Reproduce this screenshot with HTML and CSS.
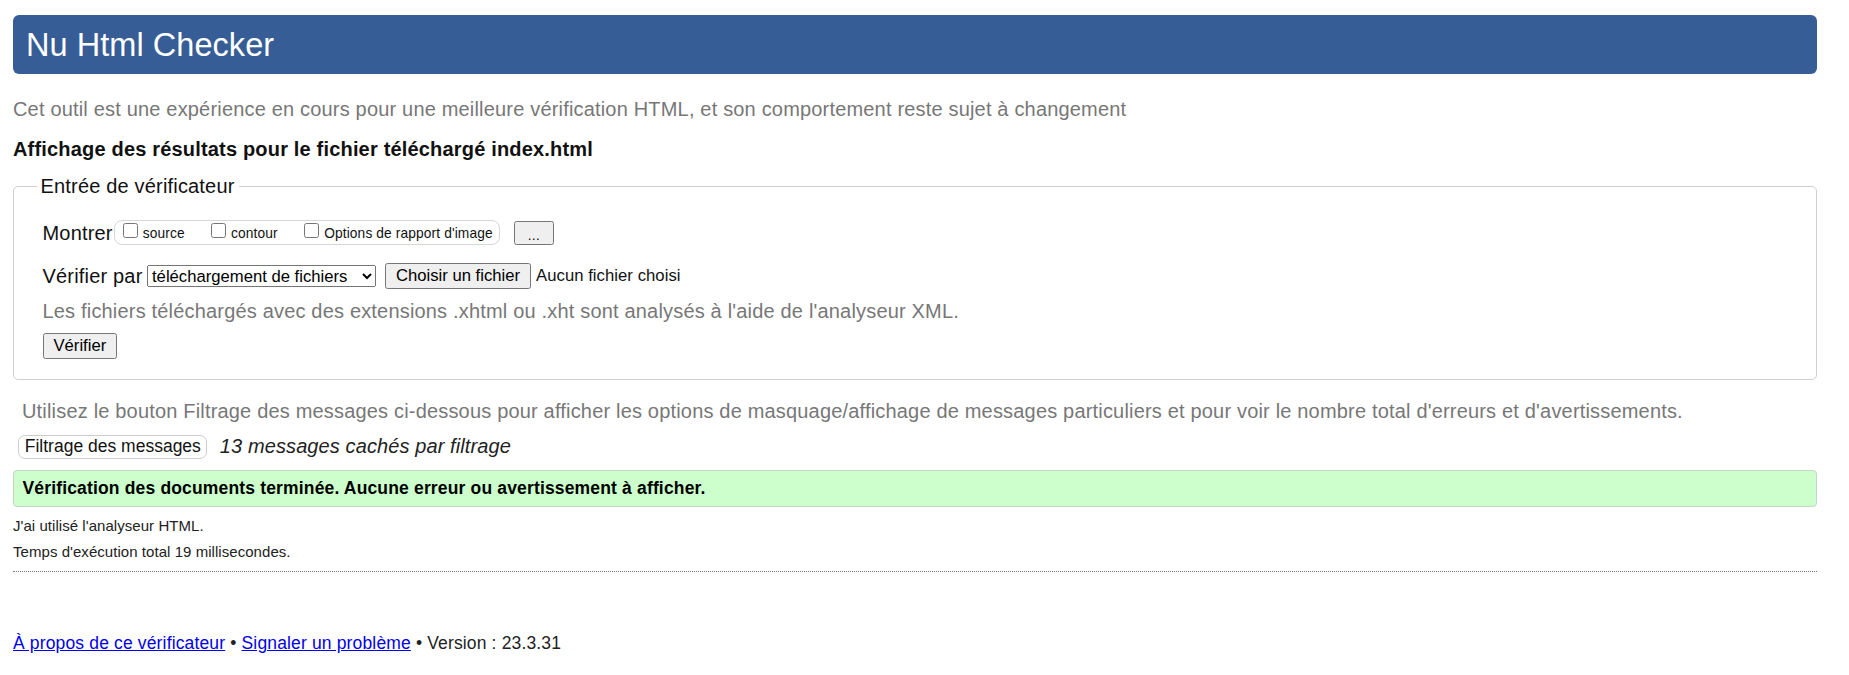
FILE: index.html
```html
<!DOCTYPE html>
<html lang="fr">
<head>
<meta charset="utf-8">
<title>Nu Html Checker</title>
<link rel="stylesheet" href="styles.css">
</head>
<body>
<h1 class="title">Nu Html Checker</h1>
<p class="intro">Cet outil est une expérience en cours pour une meilleure vérification HTML, et son comportement reste sujet à changement</p>
<p class="showing">Affichage des résultats pour le fichier téléchargé index.html</p>
<form class="checker">
  <fieldset class="input-box">
    <legend class="input-legend">Entrée de vérificateur</legend>
    <div class="row row-show">
      <span class="row-label">Montrer</span>
      <span class="options">
        <label class="opt"><input type="checkbox" class="cb"><span class="opt-text">source</span></label>
        <label class="opt"><input type="checkbox" class="cb"><span class="opt-text">contour</span></label>
        <label class="opt"><input type="checkbox" class="cb"><span class="opt-text">Options de rapport d'image</span></label>
      </span>
      <button type="button" class="more">…</button>
    </div>
    <div class="row row-by">
      <span class="row-label">Vérifier par</span>
      <select class="by-select"><option>téléchargement de fichiers</option></select>
      <button type="button" class="file-btn">Choisir un fichier</button>
      <span class="file-name">Aucun fichier choisi</span>
    </div>
    <p class="hint">Les fichiers téléchargés avec des extensions .xhtml ou .xht sont analysés à l'aide de l'analyseur XML.</p>
    <div class="row row-submit">
      <button type="button" class="submit">Vérifier</button>
    </div>
  </fieldset>
</form>
<p class="filter-hint">Utilisez le bouton Filtrage des messages ci-dessous pour afficher les options de masquage/affichage de messages particuliers et pour voir le nombre total d'erreurs et d'avertissements.</p>
<div class="filter-row">
  <button type="button" class="filter-btn">Filtrage des messages</button>
  <em class="hidden-count">13 messages cachés par filtrage</em>
</div>
<p class="success">Vérification des documents terminée. Aucune erreur ou avertissement à afficher.</p>
<p class="stats stats-first">J'ai utilisé l'analyseur HTML.</p>
<p class="stats">Temps d'exécution total 19 millisecondes.</p>
<hr class="sep">
<p class="footer"><a href="#" class="foot-link">À propos de ce vérificateur</a> • <a href="#" class="foot-link">Signaler un problème</a> • Version : 23.3.31</p>
</body>
</html>
```

FILE: styles.css
```css
html {
  background: #fff;
}

body {
  margin: 0;
  padding: 15px 32px 0 13px;
  font-family: "Liberation Sans", Arial, sans-serif;
  font-size: 20px;
  letter-spacing: 0.18px;
  color: #111;
}

.title {
  margin: 0;
  height: 59px;
  padding: 0 13px;
  background: #365d95;
  color: #fff;
  border-radius: 6px;
  font-size: 32.5px;
  font-weight: normal;
  letter-spacing: 0.05px;
  line-height: 60px;
}

.intro {
  margin: 22.5px 0 0;
  line-height: 24px;
  color: #777;
}

.showing {
  margin: 16px 0 0;
  line-height: 24px;
  font-weight: bold;
  color: #111;
}

.checker {
  margin: 14px 0 0;
}

.input-box {
  margin: 0;
  padding: 22px 20px 20px 28.5px;
  border: 1px solid #cfcfcf;
  border-radius: 5px;
}

.input-legend {
  margin-left: -6px;
  padding: 0 4px;
  line-height: 23px;
  color: #111;
}

.row {
  display: flex;
  align-items: center;
}

.row-show {
  height: 25px;
  align-items: flex-start;
}

.row-label {
  line-height: 26px;
}

.options {
  display: flex;
  align-items: flex-start;
  gap: 26.4px;
  box-sizing: border-box;
  height: 25px;
  margin-left: 1px;
  padding: 2px 6.5px 0 8px;
  border: 1px solid #d6d6d6;
  border-radius: 8px;
  font-size: 13.75px;
  letter-spacing: 0.12px;
}

.opt {
  display: flex;
  align-items: flex-start;
}

.cb {
  width: 15px;
  height: 15px;
  margin: 0 5px 0 0;
}

.opt-text {
  padding-top: 3px;
}

.more {
  box-sizing: border-box;
  width: 40px;
  height: 24px;
  margin: 1px 0 0 13.5px;
  padding: 0;
  font-family: "Liberation Sans", Arial, sans-serif;
  font-size: 13px;
  line-height: 26px;
}

.row-by {
  height: 26px;
  margin-top: 18px;
}

.by-select {
  box-sizing: border-box;
  width: 229px;
  height: 22px;
  margin: 0 0 0 4.5px;
  font-family: "Liberation Sans", Arial, sans-serif;
  font-size: 16.67px;
}

.file-btn {
  box-sizing: border-box;
  height: 26px;
  margin-left: 9px;
  padding: 0 9px;
  font-family: "Liberation Sans", Arial, sans-serif;
  font-size: 16.67px;
}

.file-name {
  margin-left: 5px;
  font-size: 16.67px;
  letter-spacing: 0.05px;
}

.hint {
  margin: 10px 0 0;
  line-height: 24px;
  color: #777;
}

.row-submit {
  margin-top: 10px;
}

.submit {
  box-sizing: border-box;
  height: 26px;
  padding: 0 9px;
  font-family: "Liberation Sans", Arial, sans-serif;
  font-size: 16.67px;
}

.filter-hint {
  margin: 19.5px 0 0;
  padding-left: 9px;
  line-height: 24px;
  color: #777;
}

.filter-row {
  display: flex;
  align-items: center;
  margin-top: 11.5px;
  padding-left: 5.3px;
}

.filter-btn {
  box-sizing: border-box;
  height: 24px;
  padding: 0 5.5px;
  border: 1px solid #cdcdcd;
  border-radius: 7px;
  background: #fff;
  color: #111;
  font-family: "Liberation Sans", Arial, sans-serif;
  font-size: 17.5px;
}

.hidden-count {
  margin-left: 12.5px;
  font-size: 20px;
  letter-spacing: 0.1px;
  color: #222;
}

.success {
  margin: 11px 0 0;
  padding: 7px 8.5px;
  border: 1px solid #c6d6c6;
  border-radius: 4px;
  background: #ccffcc;
  font-size: 17.5px;
  letter-spacing: 0.16px;
  line-height: 21px;
  font-weight: bold;
  color: #000;
}

.stats {
  margin: 8px 0 0;
  font-size: 15px;
  letter-spacing: 0.05px;
  line-height: 18px;
  color: #222;
}

.stats-first {
  margin-top: 10px;
}

.sep {
  margin: 10px 0 0;
  border: 0;
  border-top: 1px dotted #777;
  height: 0;
}

.footer {
  margin: 61.5px 0 0;
  font-size: 17.5px;
  letter-spacing: 0.15px;
  line-height: 21px;
  color: #222;
}

.foot-link {
  color: #0000ee;
}
```
